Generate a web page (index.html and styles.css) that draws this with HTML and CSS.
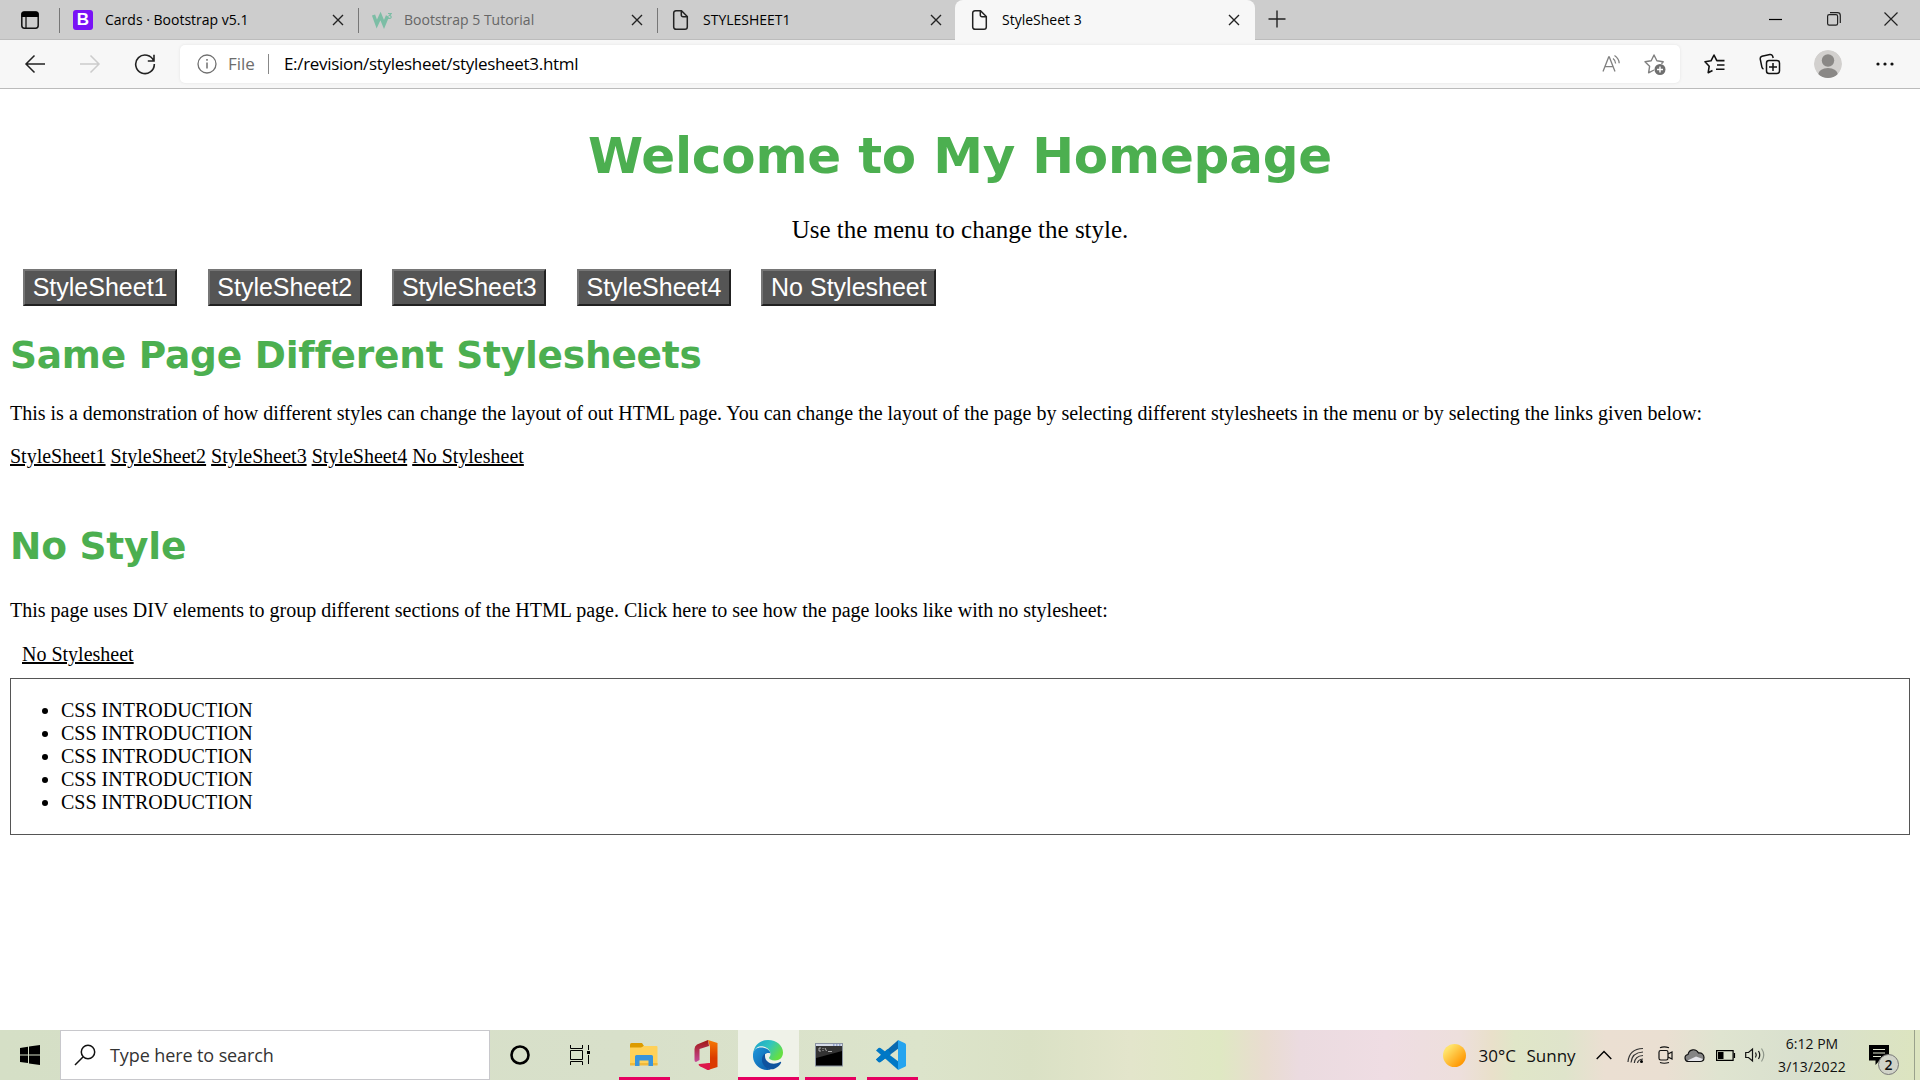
FILE: index.html
```html
<!DOCTYPE html>
<html lang="en">
<head>
<meta charset="utf-8">
<title>StyleSheet 3</title>
<link rel="stylesheet" href="styles.css">
</head>
<body>
<header class="tabstrip">
  <div class="tab-actions"><svg width="20" height="20" viewBox="0 0 20 20"><rect x="1.8" y="2" width="16.4" height="16.2" rx="2.6" fill="none" stroke="#111" stroke-width="1.5"/><path d="M1.5 7V4a2.500 2.500 0 0 1 2.500-2.500h12A2.500 2.500 0 0 1 18.500 4v3z" fill="#000"/><path d="M6 7v11" stroke="#111" stroke-width="1.3"/></svg></div>
  <div class="tab"><span class="favicon bootstrap">B</span><span class="tab-title">Cards · Bootstrap v5.1</span><svg class="x" width="12" height="12" viewBox="0 0 12 12"><path d="M1 1l10 10M11 1L1 11"/></svg></div>
  <div class="tab faded"><span class="favicon"><svg width="20" height="20" viewBox="0 0 20 20"><path d="M1.500 5l3.300 9L8.500 6l3.500 8.500 3.500-8.500" fill="none" stroke="#7cbda5" stroke-width="3.400"/><path d="M16 3.500h3.200l-1.800 2q2 .2 1.700 1.900-.7 1.500-3 .8" fill="none" stroke="#7cbda5" stroke-width="1.200"/></svg></span><span class="tab-title">Bootstrap 5 Tutorial</span><svg class="x" width="12" height="12" viewBox="0 0 12 12"><path d="M1 1l10 10M11 1L1 11"/></svg></div>
  <div class="tab"><span class="favicon"><svg width="20" height="22" viewBox="0 0 20 22"><path d="M5 1.700h5.500l5.800 5.800V18a2.300 2.300 0 0 1-2.300 2.300H5A2.300 2.300 0 0 1 2.700 18V4A2.300 2.300 0 0 1 5 1.700zM10.300 2v4a1.700 1.700 0 0 0 1.700 1.700h4" fill="none" stroke="#222" stroke-width="1.500"/></svg></span><span class="tab-title">STYLESHEET1</span><svg class="x" width="12" height="12" viewBox="0 0 12 12"><path d="M1 1l10 10M11 1L1 11"/></svg></div>
  <div class="tab active"><span class="favicon"><svg width="20" height="22" viewBox="0 0 20 22"><path d="M5 1.700h5.500l5.800 5.800V18a2.300 2.300 0 0 1-2.300 2.300H5A2.300 2.300 0 0 1 2.700 18V4A2.300 2.300 0 0 1 5 1.700zM10.300 2v4a1.700 1.700 0 0 0 1.700 1.700h4" fill="none" stroke="#222" stroke-width="1.500"/></svg></span><span class="tab-title">StyleSheet 3</span><svg class="x" width="12" height="12" viewBox="0 0 12 12"><path d="M1 1l10 10M11 1L1 11"/></svg></div>
  <div class="new-tab"><svg width="18" height="18" viewBox="0 0 18 18"><path d="M9 .500v17M.500 9h17" stroke="#222" stroke-width="1.400"/></svg></div>
  <div class="window-controls">
    <svg width="14" height="14" viewBox="0 0 14 14"><path d="M0 7.500h13" stroke="#000"/></svg>
    <svg width="14" height="14" viewBox="0 0 14 14"><rect x=".6" y="2.600" width="10" height="10.500" rx="1.600"/><path d="M3 .7h7.500a2.800 2.800 0 0 1 2.800 2.800V11"/></svg>
    <svg width="14" height="14" viewBox="0 0 14 14"><path d="M.500.500l13 13M13.500.500l-13 13"/></svg>
  </div>
</header>
<nav class="toolbar">
  <svg class="nav-icon" width="22" height="22" viewBox="0 0 22 22"><path d="M10.500 2.500L2 11l8.500 8.500M2 11h19" stroke="#222"/></svg>
  <svg class="nav-icon" width="22" height="22" viewBox="0 0 22 22"><path d="M11.500 2.500L20 11l-8.500 8.500M20 11H1" stroke="#ccc"/></svg>
  <svg class="nav-icon" width="22" height="22" viewBox="0 0 22 22"><path d="M19.700 8A9.300 9.300 0 1 0 20.300 11M20 1.800V8h-6.200" stroke="#222" stroke-width="1.600"/></svg>
  <div class="address">
    <svg width="20" height="20" viewBox="0 0 20 20"><circle cx="10" cy="10" r="9" fill="none" stroke="#707070" stroke-width="1.300"/><path d="M10 8.500v6M10 5v1.700" stroke="#707070" stroke-width="1.500"/></svg>
    <span class="scheme">File</span><span class="url">E:/revision/stylesheet/stylesheet3.html</span>
    <svg class="read" width="20" height="20" viewBox="0 0 20 20"><path d="M1 17.500L6.700 3h.6L13 17.500M3 12.700h8M11 4.500q2.500 1.800 2.600 5M12.500 1.500q4.500 3 4.700 7.700" fill="none" stroke="#808080" stroke-width="1.300"/></svg>
    <svg width="22" height="22" viewBox="0 0 22 22"><path d="M10 17L4.600 19.800l1-6.500L1 8.800l6.200-1L10 2l2.900 5.800 6.300 1-1.700 2" fill="none" stroke="#808080" stroke-width="1.400" stroke-linejoin="round"/><circle cx="16" cy="16.500" r="5.500" fill="#6f6f6f"/><path d="M16 13.500v6M13 16.500h6" stroke="#fff" stroke-width="1.400"/></svg>
  </div>
  <div class="tools">
    <svg width="22" height="22" viewBox="0 0 22 22"><path d="M8.500 17.500l-4.300 2.200 1-6.500L1 8.800l6-1L10 2l2.800 5.600h7.700M13 12h7.500M12 16.300h8.500" fill="none" stroke="#111" stroke-width="1.600" stroke-linejoin="round"/></svg>
    <svg width="22" height="22" viewBox="0 0 22 22"><rect x="7.500" y="7.500" width="13" height="13" rx="2.500" fill="none" stroke="#111" stroke-width="1.500"/><path d="M14 10v8M10 14h8M4.500 16q-1.300-.4-1.600-1.800L1.200 5.800q-.2-2 1.700-2.600l8-1.800q2-.2 2.700 1.600l.6 2" fill="none" stroke="#111" stroke-width="1.500"/></svg>
    <svg width="28" height="28" viewBox="0 0 28 28"><defs><clipPath id="av"><circle cx="14" cy="14" r="14"/></clipPath></defs><g clip-path="url(#av)"><circle cx="14" cy="14" r="14" fill="#d2d0ce"/><circle cx="14" cy="10.500" r="6.200" fill="#8a8886"/><ellipse cx="14" cy="25" rx="10" ry="7" fill="#8a8886"/></g></svg>
    <svg width="18" height="22" viewBox="0 0 18 22"><g fill="#111"><circle cx="2" cy="11" r="1.600"/><circle cx="9" cy="11" r="1.600"/><circle cx="16" cy="11" r="1.600"/></g></svg>
  </div>
</nav>
<main class="page">
  <h1>Welcome to My Homepage</h1>
  <p class="lead">Use the menu to change the style.</p>
  <div class="menu"><button>StyleSheet1</button><button>StyleSheet2</button><button>StyleSheet3</button><button>StyleSheet4</button><button>No Stylesheet</button></div>
  <h2 class="same">Same Page Different Stylesheets</h2>
  <p class="intro">This is a demonstration of how different styles can change the layout of out HTML page. You can change the layout of the page by selecting different stylesheets in the menu or by selecting the links given below:</p>
  <p class="links"><a href="#">StyleSheet1</a> <a href="#">StyleSheet2</a> <a href="#">StyleSheet3</a> <a href="#">StyleSheet4</a> <a href="#">No Stylesheet</a></p>
  <h2 class="none">No Style</h2>
  <p class="about">This page uses DIV elements to group different sections of the HTML page. Click here to see how the page looks like with no stylesheet:</p>
  <p class="single"><a href="#">No Stylesheet</a></p>
  <div class="box"><ul><li>CSS INTRODUCTION</li><li>CSS INTRODUCTION</li><li>CSS INTRODUCTION</li><li>CSS INTRODUCTION</li><li>CSS INTRODUCTION</li></ul></div>
</main>
<footer class="taskbar">
  <div class="start"><svg width="20" height="20" viewBox="0 0 20 20"><path d="M0 2.900L8 1.700v7.700H0zM9 1.500L20 0v9.400H9zM0 10.400h8v7.700L0 17zM9 10.400h11V20L9 18.400z"/></svg></div>
  <div class="search"><svg width="22" height="22" viewBox="0 0 22 22"><circle cx="14" cy="8" r="6.700" fill="none" stroke="#111" stroke-width="1.500"/><path d="M9.200 12.800L1 21" stroke="#111" stroke-width="1.500"/></svg><span class="hint">Type here to search</span></div>
  <div class="app wide"><svg width="20" height="20" viewBox="0 0 20 20"><circle cx="10" cy="10" r="8.500" fill="none" stroke="#000" stroke-width="2.600"/></svg></div>
  <div class="app wide"><svg width="20" height="20" viewBox="0 0 20 20" fill="none" stroke="#000"><path d="M.500 0v3.500h12V0M.500 20v-3.500h12V20M.500 5.500h12v9H.500zM18.500 0v5M18.500 10v9"/><path d="M17 6h3v3h-3z" fill="#000" stroke="none"/></svg></div>
  <div class="app running"><svg width="28" height="24" viewBox="0 0 28 24"><path d="M0 1.500Q0 0 1.500 0H12l2 3-2 2H0z" fill="#dc9b00"/><path d="M0 4.500h11l3-1.500h12.500q1 0 1 1V22H0z" fill="#ffd158"/><path d="M0 20h27.500v2.500H0z" fill="#f0b93a"/><path d="M5 23V13.500Q5 12 6.500 12h15q1.500 0 1.500 1.500V23h-4.500v-5.500h-9V23z" fill="#3894dc"/></svg></div>
  <div class="app office"><svg width="24" height="30" viewBox="0 0 24 30"><defs><linearGradient id="o1" x2="0" y2="1"><stop stop-color="#a21813"/><stop offset="1" stop-color="#c54a99"/></linearGradient><linearGradient id="o2" x2="0" y2="1"><stop stop-color="#f77b05"/><stop offset=".6" stop-color="#db3b00"/></linearGradient></defs><path d="M14 0l9.500 3v24L14 30l-3-6 5-1V7z" fill="url(#o2)"/><path d="M14 0L3 4.500Q.500 6 .500 9v11q0 2 1.500 2l3.500-2V9l9.500-3z" fill="url(#o1)"/><path d="M5 24l11-1v6q-1.500 1.500-3 .8l-7-3.500Q4 25 5 24z" fill="#dd174b"/></svg></div>
  <div class="app running current"><svg width="30" height="30" viewBox="0 0 30 30"><defs><linearGradient id="e1" x2="1" y2=".5"><stop stop-color="#189fcf"/><stop offset=".55" stop-color="#32c5bd"/><stop offset="1" stop-color="#65df43"/></linearGradient><linearGradient id="e2" x2="1" y2="1"><stop stop-color="#1e98db"/><stop offset="1" stop-color="#0b59a7"/></linearGradient></defs><path d="M0 14C1 5 7 0 15 0c9 0 15 6 15 12.500 0 5-3.500 8-8 8-4 0-6-1.500-6-2.700 0-.8 1.500-1.500 1.500-3.800C17.500 9 12 6 7.500 6.300 3 6.700.500 11 0 14z" fill="url(#e1)"/><path d="M0 14c.500-4.500 4-6.500 8-6.500 5 0 9.500 3 9.500 6-4-1.500-7.500 1.500-7.500 5.500 0 5 3.500 9 8 10.500C9 32-1 25 0 14z" fill="url(#e2)"/><path d="M12 13.500c-3 2-4 6.500-2 10.500 2.500 5 8 6.500 12 4.500 3-1.500 5-3.500 6-5.500.5-1-.3-1.500-1-1-7 4-15 .5-15-6z" fill="#10539e"/></svg></div>
  <div class="app running cmd"><svg width="28" height="24" viewBox="0 0 28 24"><rect x=".5" y=".5" width="27" height="22.500" fill="#000" stroke="#8a93a1"/><path d="M1 1h26v2H1z" fill="#d5dbe8"/><path d="M18 2h1.500M21 2h1.500M24 2h1.500" stroke="#5971b5"/><path d="M1 3h26v5Q12 12 1 15z" fill="#333"/><path d="M6 5H4v3h2M8 5v1M8 7v1M10 5l1.500 3M13 8.500h4" fill="none" stroke="#ccc" stroke-width=".8"/></svg></div>
  <div class="app running code"><svg width="30" height="30" viewBox="0 0 30 30"><path d="M0 10.500L2.500 8q1-.7 2 0L25 23.500l-3 6.300z" fill="#0078c6"/><path d="M0 19.500L2.500 22q1 .7 2 0L25 6.500 22 .2z" fill="#0969b0"/><path d="M0 19.500l2.500 2.500q1 .7 2 0L15 14l-3.500-5z" fill="#0078c6"/><path d="M22 0l7 3.300q1 .5 1 1.500v20.400q0 1-1 1.500L22 30z" fill="#25a4ef"/></svg></div>
  <div class="tray">
    <span class="sun"></span><span class="temp">30°C</span><span class="cond">Sunny</span>
    <svg class="chev" width="16" height="10" viewBox="0 0 16 10"><path d="M.700 9L8 1.500 15.300 9" fill="none" stroke="#000" stroke-width="1.400"/></svg>
    <svg class="wifi" width="17" height="17" viewBox="0 0 17 17" fill="none" stroke="#333" stroke-width="1.200"><path d="M1 15Q2 2 16 1.500M4 15.500Q5 5.500 16 5M7.300 16Q8 9 16 8.500M10.500 16Q11 12.500 16 12"/><circle cx="14.500" cy="14.500" r="1.500" fill="#000" stroke="none"/></svg>
    <svg class="meet" width="15" height="18" viewBox="0 0 15 18" fill="none" stroke="#111" stroke-width="1.200"><rect x="1" y="4.500" width="9" height="9.500" rx="1.700"/><path d="M10 8l4-2v7l-4-2M2 1.800Q6 0 11 1.800M2 16.500Q6 18 11 16.500"/></svg>
    <svg class="cloud" width="21" height="15" viewBox="0 0 21 15"><path d="M4.500 13.500C.500 13.500-.500 7.500 4 6.500 5 1 12 0 14.500 5 18 4.500 20 7 20 9.500s-1.500 4-4 4z" fill="#858585" stroke="#111" stroke-width="1.200"/><path d="M3.500 12.500L12 8.500l7 2.500q-1 2-3 2H5z" fill="#e5e5ea"/></svg>
    <svg class="battery" width="20" height="11" viewBox="0 0 20 11"><path d="M.600.600h16.500v9.800H.600zM18.500 3v5" fill="none" stroke="#000" stroke-width="1.200"/><path d="M2 2h5.500v7H2z"/></svg>
    <svg class="sound" width="21" height="16" viewBox="0 0 21 16" fill="none" stroke="#111" stroke-width="1.200"><path d="M.700 5.500h2.800L7.500 2v12L3.500 10.500H.700zM10.500 5.500q1.500 2.500 0 5M13.500 4q2.500 4 0 8"/><path d="M16.500 1.500q4.500 6.500 0 13" stroke="#8f978b"/></svg>
    <div class="clock"><span>6:12 PM</span><span class="date">3/13/2022</span></div>
    <div class="notes"><svg width="20" height="20" viewBox="0 0 20 20"><path d="M0 0h20v15.500H10.500L6.500 20v-4.500H0z"/><path d="M4 4.500h12M4 8h12M4 11.500h8" stroke="#dfe5cf" stroke-width="1.200"/></svg><span class="badge">2</span></div>
  </div>
</footer>
</body>
</html>
```
FILE: styles.css
```css
* { box-sizing: border-box; }
html, body { height: 100%; }
body { margin: 0; display: flex; flex-direction: column; background: #fff; color: #000; font: 20px/23px "Liberation Serif", serif; overflow: hidden; }
svg { display: block; flex: none; }

.tabstrip, .toolbar, .taskbar { flex: none; display: flex; font-family: "Open Sans", "Noto Sans", sans-serif; white-space: nowrap; }
.tabstrip { height: 40px; background: #cdcdcd; box-shadow: inset 0 -1px #bcbcbc; font-size: 14px; line-height: 20px; }
.tab-actions { width: 59px; padding: 10px 0 0 20px; }
.tab { width: 299px; height: 40px; display: flex; align-items: center; padding: 0 14px; background: linear-gradient(#777, #777) 0 8px / 1px 25px no-repeat; }
.tab.active { width: 300px; margin-left: -1px; padding: 0 15px; background: #f7f7f7; border-radius: 8px 8px 0 0; }
.faded .tab-title { color: #666; }
.favicon { width: 20px; margin-right: 12px; }
.bootstrap { height: 20px; border-radius: 3px; background: #7a12f6; color: #fff; font: bold 17px/20px "Liberation Sans", sans-serif; text-align: center; }
.tab-title { margin-right: auto; }
.x { stroke: #222; stroke-width: 1.4; }
.new-tab { padding: 10px 0 0 13px; }
.window-controls { margin-left: auto; display: flex; gap: 43.5px; padding: 12px 22px 0 0; fill: none; stroke: #222; stroke-width: 1.2; }

.toolbar { height: 49px; background: #f7f7f7; border-bottom: 1px solid #bbb; align-items: center; padding: 0 24px 1px; }
.nav-icon { margin-right: 33px; fill: none; stroke-width: 1.5; }
.address { width: 1500px; height: 38px; margin-left: -9px; background: #fff; border-radius: 5px; box-shadow: 0 0 3px #e2e2e2; display: flex; align-items: center; padding: 0 14px 0 17px; font-size: 17px; }
.scheme { margin-left: 11px; color: #6d6d6d; }
.url { margin-left: 13px; padding-left: 16px; letter-spacing: -0.3px; background: linear-gradient(#888, #888) 0 50% / 1px 20px no-repeat; }
.read { margin: 0 22px 0 auto; }
.tools { margin-left: 24px; display: flex; align-items: center; }
.tools svg:nth-child(2) { margin-left: 33px; }
.tools svg:nth-child(3) { margin-left: 33px; }
.tools svg:nth-child(4) { margin-left: 34px; }

.page { flex: 1; min-height: 0; padding: 0 10px; }
h1, h2, p, ul { margin: 0; }
h1, h2 { color: #4caf50; font-family: "DejaVu Sans", sans-serif; font-weight: bold; letter-spacing: -0.22px; }
h1 { margin-top: 37px; font-size: 50px; line-height: 61px; text-align: center; }
h2 { font-size: 37.5px; line-height: 46px; }
a { color: inherit; text-decoration: underline 2px; }
.lead { margin-top: 28px; font-size: 25px; line-height: 29px; text-align: center; }
.menu { margin-top: 25px; padding-left: 13px; display: flex; gap: 30.4px; }
button { height: 37px; padding: 2px 7.7px; border: 2px outset #767676; border-radius: 0; background: #555; color: #fff; font: 25px/29px "Liberation Sans", sans-serif; }
.same { margin-top: 26px; }
.intro { margin-top: 24px; }
.links { margin-top: 20px; }
.none { margin-top: 55px; }
.about { margin-top: 30px; }
.single { margin: 21px 0 0 12px; }
.box { margin-top: 12px; height: 157px; border: 1px solid #555; padding: 20px 0; }
ul { padding-left: 50px; }

.taskbar { height: 50px; background: linear-gradient(90deg, #d5dfc6 0, #d8e0ca 620px, #dce4cb 920px, #dae1c5 1030px, #e3e5cb 1130px, #dfe8c3 1220px, #e9dcd0 1264px, #ebdbe0 1300px, #efdde3 1385px, #eddfdc 1460px, #e9e0ca 1492px, #e0e6c8 1515px, #dfe4cb 1565px, #ebdfd2 1605px, #eadfd2 1665px, #dfe4d0 1720px, #d9e0ce 1800px, #dce4c0 1914px); }
.start { width: 60px; padding: 15px 20px; }
.search { width: 430px; border: 1px solid #c8c8cc; background: #fff; display: flex; align-items: center; padding-left: 13px; gap: 14px; font-size: 18px; color: #333; }
.hint { letter-spacing: -0.1px; }
.app { width: 51px; display: flex; justify-content: center; align-items: center; }
.wide { width: 60px; }
.running { border-bottom: 3px solid #e60060; padding-top: 3px; }
.wide + .running { margin-left: 9px; }
.wide + .running { padding-right: 2px; }
.office { width: 68px; padding-left: 3px; }
.current { width: 61px; padding-right: 2px; background: #eff2e8; }
.cmd { margin-left: 6px; padding-right: 3px; }
.code { margin-left: 11px; padding-right: 3px; }
.tray { margin-left: auto; padding-right: 10px; display: flex; align-items: center; font-size: 17px; color: #111; background: linear-gradient(#9aa18c, #9aa18c) right 5px top 0 / 1px 100% no-repeat; }
.sun { width: 23px; height: 23px; border-radius: 50%; background: linear-gradient(135deg, #ffe36b 20%, #ff9500 85%); margin-right: 13px; }
.temp { width: 48px; }
.cond { width: 50px; }
.chev { margin-left: 19.5px; }
.wifi { margin-left: 15px; }
.meet { margin-left: 14px; }
.cloud { margin-left: 11px; }
.battery { margin-left: 11px; }
.sound { margin-left: 9px; }
.clock { width: 80px; margin-left: 6px; display: flex; flex-direction: column; align-items: center; font-size: 14px; line-height: 23px; }
.date { letter-spacing: 0.2px; }
.notes { position: relative; margin-left: 17px; width: 41px; }
.badge { position: absolute; left: 9px; top: 9px; width: 21px; height: 21px; border: 1px solid #777; border-radius: 50%; background: #d0d3c8; font-size: 14px; line-height: 19px; text-align: center; font-weight: 600; }
```
